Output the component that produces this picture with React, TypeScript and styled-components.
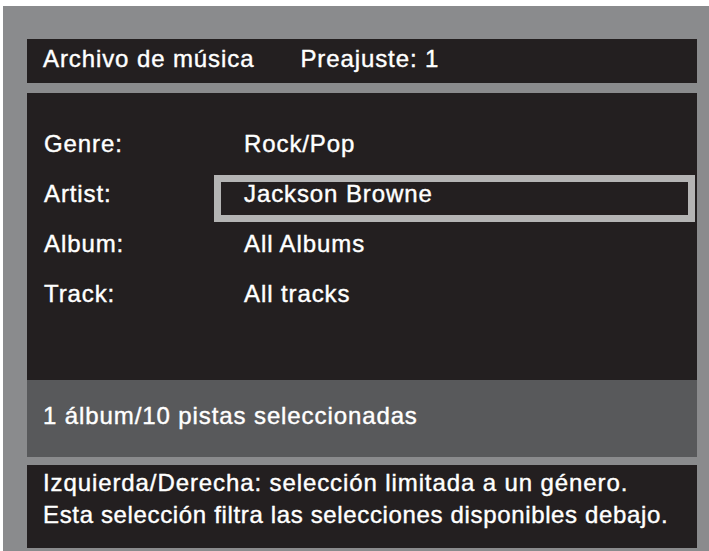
import React from "react";
import styled, { createGlobalStyle } from "styled-components";

const GlobalStyle = createGlobalStyle`
  body {
    margin: 0;
    background: #ffffff;
    font-family: "Liberation Sans", Arial, Helvetica, sans-serif;
  }
`;

const Frame = styled.div`
  margin: 6px 0 0 3px;
  width: 706px;
  box-sizing: border-box;
  padding: 33px 12px 3px 24px;
  background: #8a8b8d;
  display: flex;
  flex-direction: column;
  color: #ffffff;
  font-size: 24px;
  letter-spacing: 0.9px;
  line-height: 27px;
  -webkit-text-stroke: 0.4px #ffffff;
`;

const TitleBar = styled.div`
  height: 44px;
  box-sizing: border-box;
  padding: 0 0 5px 16px;
  background: #231f20;
  display: flex;
  align-items: center;
  gap: 46px;
`;

const Browser = styled.div`
  margin-top: 10px;
  height: 287px;
  box-sizing: border-box;
  padding: 26px 0 0 17px;
  background: #231f20;
  display: flex;
  flex-direction: column;
`;

const Row = styled.div`
  display: grid;
  grid-template-columns: 200px 1fr;
  height: 50px;
  align-items: start;
`;

const Label = styled.div`
  line-height: 50px;
`;

interface ValueProps {
  $selected?: boolean;
}

const Value = styled.div<ValueProps>`
  line-height: 50px;
  ${(p) =>
    p.$selected &&
    `
    margin: 6px 2px 0 -30px;
    height: 47px;
    box-sizing: border-box;
    border: 7px solid #b4b4b4;
    padding: 0 0 10px 23px;
    line-height: 23px;
  `}
`;

const Status = styled.div`
  height: 77px;
  box-sizing: border-box;
  padding: 22px 0 0 16px;
  background: #58595b;
`;

const Hint = styled.div`
  margin-top: 8px;
  height: 83px;
  box-sizing: border-box;
  padding: 2px 0 0 16px;
  background: #231f20;
  line-height: 31.6px;
`;

interface HintLineProps {
  $tracking: number;
}

const HintLine = styled.div<HintLineProps>`
  letter-spacing: ${(p) => p.$tracking}px;
  white-space: nowrap;
`;

const fields = [
  { label: "Genre:", value: "Rock/Pop" },
  { label: "Artist:", value: "Jackson Browne", selected: true },
  { label: "Album:", value: "All Albums" },
  { label: "Track:", value: "All tracks" },
];

const App = () => (
  <>
    <GlobalStyle />
    <Frame>
      <TitleBar>
        <span>Archivo de música</span>
        <span>Preajuste: 1</span>
      </TitleBar>
      <Browser>
        {fields.map((f) => (
          <Row key={f.label}>
            <Label>{f.label}</Label>
            <Value $selected={f.selected}>{f.value}</Value>
          </Row>
        ))}
      </Browser>
      <Status>1 álbum/10 pistas seleccionadas</Status>
      <Hint>
        <HintLine $tracking={0.9}>
          Izquierda/Derecha: selección limitada a un género.
        </HintLine>
        <HintLine $tracking={0.65}>
          Esta selección filtra las selecciones disponibles debajo.
        </HintLine>
      </Hint>
    </Frame>
  </>
);

export default App;
